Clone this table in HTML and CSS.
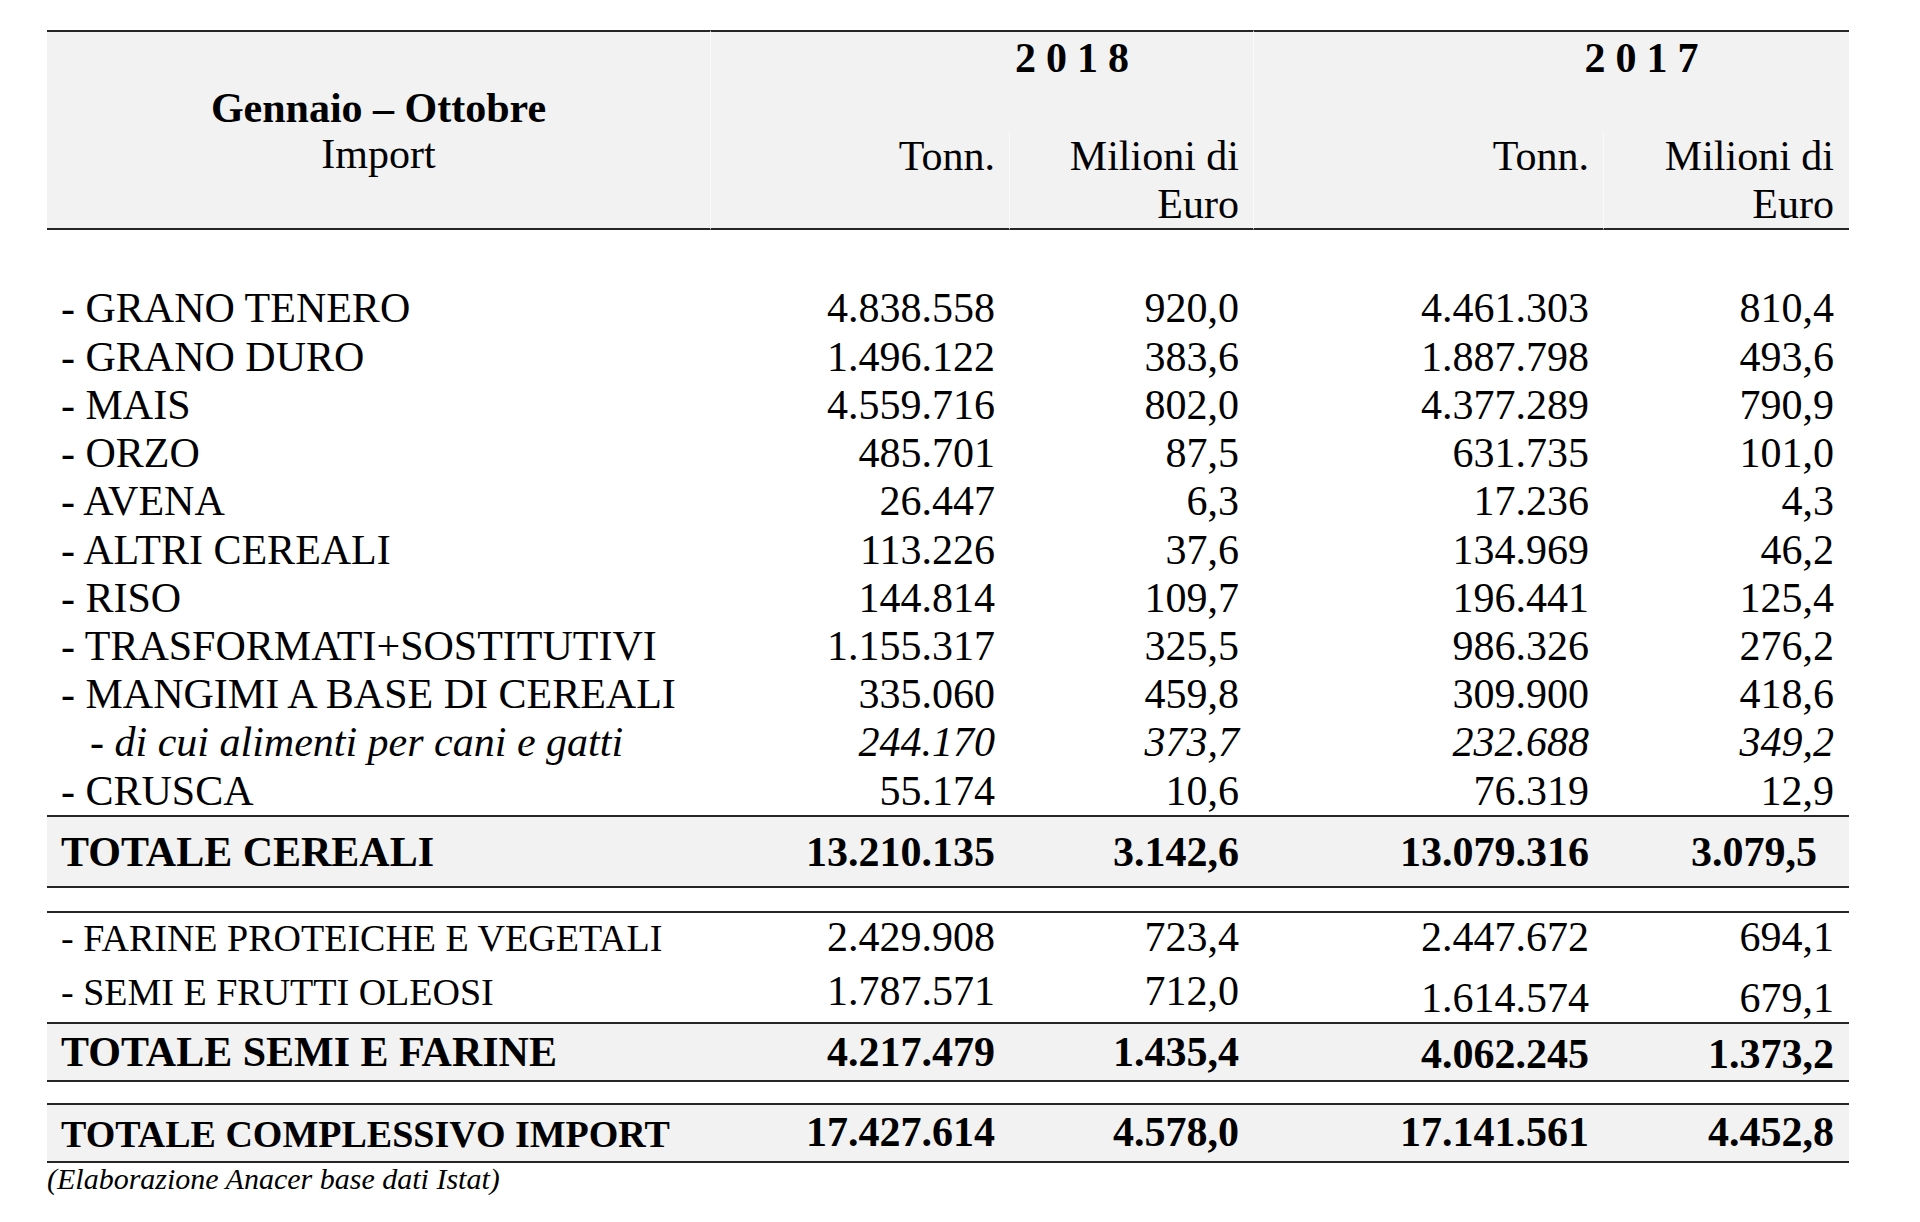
FILE: index.html
```html
<!DOCTYPE html>
<html lang="it">
<head>
<meta charset="utf-8">
<title>Import cereali – Gennaio – Ottobre</title>
<link rel="stylesheet" href="styles.css">
</head>
<body>
<main class="page">
  <table class="tbl">
    <colgroup>
      <col class="c-label"><col class="c-t18"><col class="c-m18"><col class="c-t17"><col class="c-m17">
    </colgroup>
    <thead>
      <tr class="h1">
        <th class="hlabel" rowspan="2"><b>Gennaio – Ottobre</b><br>Import</th>
        <th class="year" colspan="2">2018</th>
        <th class="year" colspan="2">2017</th>
      </tr>
      <tr class="h2">
        <th class="num">Tonn.</th>
        <th class="num">Milioni di<br>Euro</th>
        <th class="num">Tonn.</th>
        <th class="num last">Milioni di<br>Euro</th>
      </tr>
    </thead>
    <tbody>
      <tr class="gap gap-top"><td colspan="5"></td></tr>
      <tr class="item"><td class="lbl">- GRANO TENERO</td><td class="num">4.838.558</td><td class="num">920,0</td><td class="num">4.461.303</td><td class="num last">810,4</td></tr>
      <tr class="item"><td class="lbl">- GRANO DURO</td><td class="num">1.496.122</td><td class="num">383,6</td><td class="num">1.887.798</td><td class="num last">493,6</td></tr>
      <tr class="item"><td class="lbl">- MAIS</td><td class="num">4.559.716</td><td class="num">802,0</td><td class="num">4.377.289</td><td class="num last">790,9</td></tr>
      <tr class="item"><td class="lbl">- ORZO</td><td class="num">485.701</td><td class="num">87,5</td><td class="num">631.735</td><td class="num last">101,0</td></tr>
      <tr class="item"><td class="lbl">- AVENA</td><td class="num">26.447</td><td class="num">6,3</td><td class="num">17.236</td><td class="num last">4,3</td></tr>
      <tr class="item"><td class="lbl">- ALTRI CEREALI</td><td class="num">113.226</td><td class="num">37,6</td><td class="num">134.969</td><td class="num last">46,2</td></tr>
      <tr class="item"><td class="lbl">- RISO</td><td class="num">144.814</td><td class="num">109,7</td><td class="num">196.441</td><td class="num last">125,4</td></tr>
      <tr class="item"><td class="lbl">- TRASFORMATI+SOSTITUTIVI</td><td class="num">1.155.317</td><td class="num">325,5</td><td class="num">986.326</td><td class="num last">276,2</td></tr>
      <tr class="item"><td class="lbl">- MANGIMI A BASE DI CEREALI</td><td class="num">335.060</td><td class="num">459,8</td><td class="num">309.900</td><td class="num last">418,6</td></tr>
      <tr class="item sub"><td class="lbl">- di cui alimenti per cani e gatti</td><td class="num">244.170</td><td class="num">373,7</td><td class="num">232.688</td><td class="num last">349,2</td></tr>
      <tr class="item"><td class="lbl">- CRUSCA</td><td class="num">55.174</td><td class="num">10,6</td><td class="num">76.319</td><td class="num last">12,9</td></tr>
      <tr class="tot tot-cer"><td class="lbl">TOTALE CEREALI</td><td class="num">13.210.135</td><td class="num">3.142,6</td><td class="num">13.079.316</td><td class="num last wide">3.079,5</td></tr>
      <tr class="gap gap-a"><td colspan="5"></td></tr>
      <tr class="oil oil-a"><td class="lbl">- FARINE PROTEICHE E VEGETALI</td><td class="num">2.429.908</td><td class="num">723,4</td><td class="num">2.447.672</td><td class="num last">694,1</td></tr>
      <tr class="oil oil-b"><td class="lbl">- SEMI E FRUTTI OLEOSI</td><td class="num">1.787.571</td><td class="num">712,0</td><td class="num low">1.614.574</td><td class="num last low">679,1</td></tr>
      <tr class="tot tot-semi"><td class="lbl">TOTALE SEMI E FARINE</td><td class="num">4.217.479</td><td class="num">1.435,4</td><td class="num low">4.062.245</td><td class="num last low">1.373,2</td></tr>
      <tr class="gap gap-b"><td colspan="5"></td></tr>
      <tr class="tot tot-all"><td class="lbl">TOTALE COMPLESSIVO IMPORT</td><td class="num">17.427.614</td><td class="num">4.578,0</td><td class="num">17.141.561</td><td class="num last">4.452,8</td></tr>
    </tbody>
  </table>
  <p class="note">(Elaborazione Anacer base dati Istat)</p>
</main>
</body>
</html>
```

FILE: styles.css
```css
html, body {
  margin: 0;
  padding: 0;
  background: #ffffff;
}

body {
  font-family: "Liberation Serif", "Times New Roman", serif;
  color: #000000;
}

.page {
  padding: 30px 0 0 47px;
}

.tbl {
  border-collapse: separate;
  border-spacing: 0;
  table-layout: fixed;
  width: 1802px;
  font-size: 42px;
}

.c-label { width: 663px; }
.c-t18 { width: 299px; }
.c-m18 { width: 244px; }
.c-t17 { width: 350px; }
.c-m17 { width: 246px; }

.tbl th,
.tbl td {
  padding: 0;
  vertical-align: top;
  font-weight: normal;
  line-height: 48.2px;
}

.tbl .num {
  text-align: right;
  padding-right: 14px;
}

.tbl .num.last {
  padding-right: 15px;
}

.tbl .lbl {
  text-align: left;
  padding-left: 14px;
  white-space: nowrap;
}

/* header */
.tbl thead th {
  background: #f2f2f2;
}

.h1 th {
  border-top: 2px solid #262626;
}

.h2 th {
  border-bottom: 2px solid #262626;
  border-left: 1px solid #fafafa;
  line-height: 48px;
}

.tbl .hlabel {
  text-align: center;
  vertical-align: middle;
  line-height: 46px;
  padding-top: 2px;
  border-bottom: 2px solid #262626;
}

.hlabel b {
  font-weight: bold;
}

.tbl .year {
  font-weight: bold;
  text-align: center;
  letter-spacing: 10px;
  line-height: 48px;
  padding: 2px 0 49.8px 190px;
  border-left: 1px solid #fafafa;
}

/* spacers */
.gap td {
  padding: 0;
  line-height: 0;
  font-size: 0;
}

.gap-top td { height: 54.7px; }
.gap-a td { height: 22.3px; }
.gap-b td { height: 21.5px; }

/* item rows */
.sub td {
  font-style: italic;
}

.tbl .sub .lbl {
  padding-left: 43px;
}

/* totals */
.tot td {
  background: #f2f2f2;
  font-weight: bold;
  border-top: 2px solid #262626;
  border-bottom: 2px solid #262626;
}

.tot-cer td {
  padding-top: 11px;
  padding-bottom: 10.5px;
}

.tbl .tot-cer .wide {
  padding-right: 32px;
}

.tot-semi td {
  padding-top: 4px;
  padding-bottom: 3.8px;
}

.tbl .tot-semi .low {
  padding-top: 6px;
  padding-bottom: 1.8px;
}

.tot-all td {
  padding-top: 3px;
  padding-bottom: 4.2px;
}

.tbl .tot-all .lbl {
  font-size: 38px;
  padding-top: 4.5px;
  padding-bottom: 2.7px;
}

/* oilseed rows */
.oil td {
  line-height: 46px;
}

.oil .lbl {
  font-size: 38px;
}

.oil-a td {
  border-top: 2px solid #262626;
  padding-top: 1px;
  padding-bottom: 8.1px;
}

.tbl .oil-a .lbl {
  padding-top: 2.4px;
  padding-bottom: 6.7px;
}

.oil-b td {
  padding-top: 0;
  padding-bottom: 8px;
}

.tbl .oil-b .lbl {
  padding-top: 1.4px;
  padding-bottom: 6.6px;
}

.tbl .oil-b .low {
  padding-top: 6.7px;
  padding-bottom: 1.3px;
}

/* footnote */
.note {
  margin: 0;
  font-size: 30px;
  line-height: 32px;
  font-style: italic;
}
```
